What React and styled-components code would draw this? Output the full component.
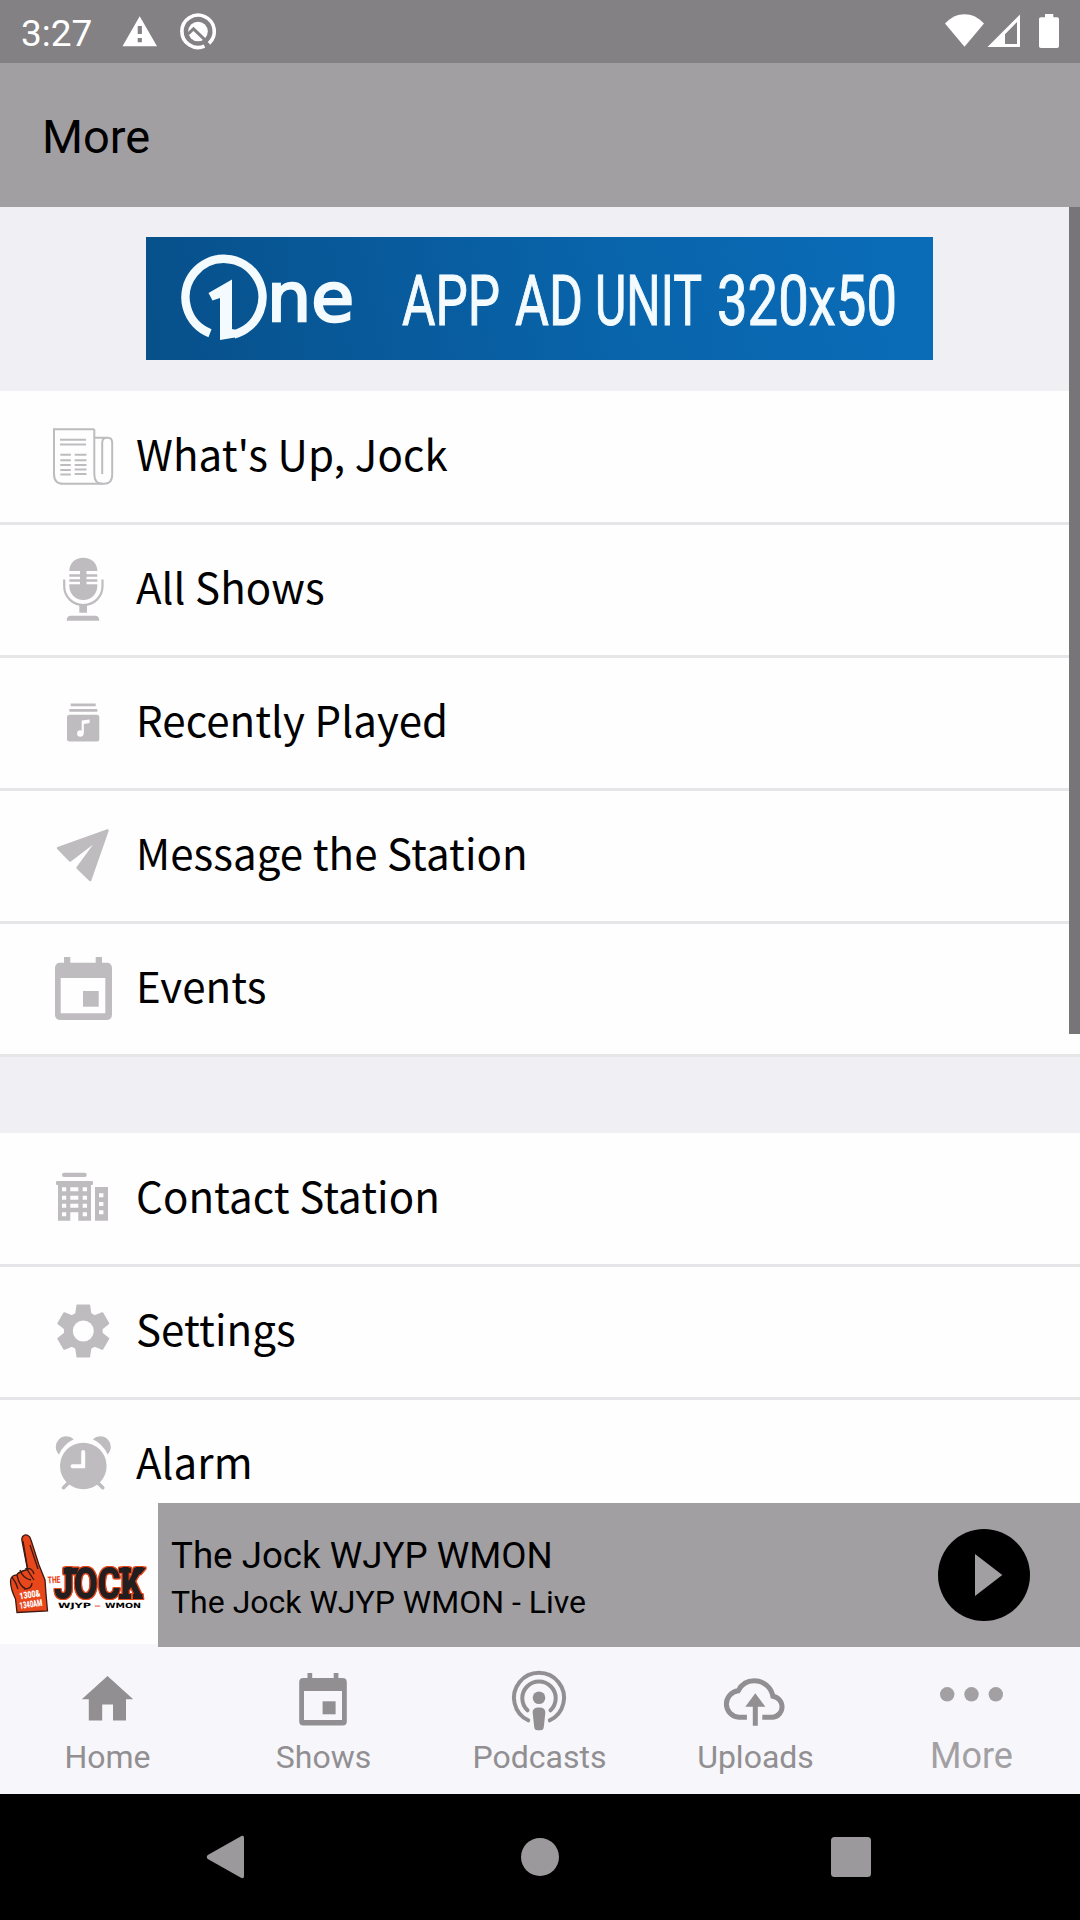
import React from 'react';
import styled, { createGlobalStyle } from 'styled-components';

const GlobalStyle = createGlobalStyle`
  * {
    box-sizing: border-box;
  }

  body {
    margin: 0;
    font-family: Roboto, 'Liberation Sans', sans-serif;
  }
`;

const Screen = styled.div`
  position: relative;
  display: flex;
  flex-direction: column;
  width: 1080px;
  height: 1920px;
  overflow: hidden;
  background-color: #f0eff3;
`;

const StatusBar = styled.div`
  display: flex;
  align-items: center;
  flex: 0 0 63px;
  padding: 0 20px 0 21px;
  background-color: #838184;
  color: #fff;

  svg {
    display: block;
    flex: none;
  }
`;

const Clock = styled.span`
  width: 99px;
  padding-top: 4px;
  font-size: 37px;
  line-height: 44px;
`;

const Spacer = styled.span`
  flex: 1;
`;

const Header = styled.header`
  flex: 0 0 144px;
  padding: 49px 42px 0;
  background-color: #a19fa2;
`;

const Title = styled.h1`
  margin: 0;
  color: #000;
  font-size: 47px;
  font-weight: 400;
  line-height: 50px;
`;

const Content = styled.main`
  flex: 0 0 1296px;
  overflow: hidden;
`;

const AdSlot = styled.div`
  height: 184px;
  padding: 30px 0 0 146px;
`;

const AdBanner = styled.svg`
  display: block;
  width: 787px;
  height: 123px;
  background: linear-gradient(80deg, #07508a 0%, #085a9b 30%, #0965ac 62%, #0a6cb8 100%);
`;

const Menu = styled.ul`
  margin: 0 0 76px;
  padding: 1px 0 0;
  background-color: #fefefe;
  list-style: none;
`;

const MenuItem = styled.li`
  display: flex;
  align-items: center;
  height: 133px;
  padding-left: 50px;
  border-bottom: 3px solid #e6e5e8;
`;

const MenuIcon = styled.svg`
  display: block;
  flex: none;
  width: 66px;
  height: 66px;
  margin-right: 20px;
  color: #bebcbf;
`;

const MenuLabel = styled.span`
  padding-bottom: 8px;
  color: #000;
  font-family: 'Noto Sans CJK SC', 'Noto Sans', sans-serif;
  font-size: 42px;
  letter-spacing: 0.08px;
  line-height: 60px;
  white-space: nowrap;
`;

// floats over the right edge of the list
const ScrollThumb = styled.div`
  position: absolute;
  top: 207px;
  right: 0;
  width: 11px;
  height: 827px;
  background-color: #777578;
`;

const Player = styled.section`
  display: flex;
  flex: 0 0 144px;
  background-color: #a19fa2;
`;

const Artwork = styled.svg`
  display: block;
  flex: none;
  width: 158px;
  height: 144px;
  background-color: #fefefe;
  border-bottom: 3px solid #f7f6fa;
`;

const Wordmark = styled.g`
  filter: drop-shadow(1px 0 #e8471c) drop-shadow(-1px 0 #e8471c) drop-shadow(0 1px #e8471c)
    drop-shadow(0 -1px #e8471c);
`;

const TrackInfo = styled.div`
  flex: 1;
  padding: 29px 0 0 13px;
  color: #000;
  white-space: nowrap;
`;

const TrackName = styled.div`
  font-size: 36.7px;
  line-height: 47px;
`;

const TrackStatus = styled.div`
  font-size: 32px;
  line-height: 46px;
`;

const PlayButton = styled.button`
  flex: none;
  align-self: center;
  width: 92px;
  height: 92px;
  margin-right: 50px;
  padding: 0;
  border: 0;
  border-radius: 50%;
  background-color: #000;

  svg {
    display: block;
  }
`;

const TabBar = styled.nav`
  display: grid;
  grid-template-columns: repeat(5, 1fr);
  flex: 0 0 147px;
  background-color: #f7f6fa;
`;

const Tab = styled.div`
  display: flex;
  flex-direction: column;
  align-items: center;
  padding-top: 18px;
  color: ${({ $active }) => ($active ? '#a2a0a3' : '#918f92')};

  svg {
    display: block;
  }
`;

const TabLabel = styled.span`
  margin-top: ${({ $active }) => ($active ? 5 : 6)}px;
  padding-right: 1px;
  font-size: ${({ $active }) => ($active ? 36 : 32)}px;
  line-height: 40px;
`;

const SystemNav = styled.div`
  display: grid;
  grid-template-columns: 315px 310px 40px;
  align-items: center;
  flex: 0 0 126px;
  padding-left: 206px;
  background-color: #000;
  color: #9b999c;

  svg {
    display: block;
  }
`;

const NewsIcon = () => (
  <MenuIcon viewBox="0 0 66 66" fill="none" stroke="currentColor" strokeWidth="2">
    <path d="M44.3 5.2H4V50c0 6.5 3 9.800 9 9.800h41c5.500 0 8.200-3.500 8.200-8.800V19c0-3.500-1.500-5.200-4.500-5.200H44.300" />
    <path d="M44.300 5.200V50c0 6 2.500 9.800 8 9.800M52.200 50V19c0-3.500 1.500-5.200 4.500-5.200" />
    <path d="M10 15.700h26M10 20.400h26" />
    <path d="M10.300 30.800h10.500M10.300 36.200h10.500M10.300 41h10.500M10.300 46h10.500M10.300 50.500h10.500" />
    <path d="M24.700 30.800H36.500M24.700 36.200H36.500M24.700 41H36.500M24.700 45.500H36.500M24.700 50H36.500" />
  </MenuIcon>
);

const MicIcon = () => (
  <MenuIcon viewBox="0 0 66 66" fill="currentColor">
    <path d="M19.300 14C19.300 6 25.500.8 33.300.8S47.300 6 47.300 14z" />
    <path d="M19.300 27.300h28V29c0 8-6.200 14-14 14s-14-6-14-14z" />
    <path d="M30 13h6.500v15H30zM19.300 17.200h28v2.500h-28zM19.300 22.200h28v2.600h-28z" />
    <path
      d="M14.200 22.500V29c0 11 8.500 19 19.100 19s19.200-8 19.200-19V22.500"
      fill="none"
      stroke="currentColor"
      strokeWidth="2.200"
    />
    <path d="M29.300 48H37v7.700h-7.700zM16.700 63.700c0-3.500 1.500-5 4-5h24.600c2.500 0 4 1.500 4 5z" />
  </MenuIcon>
);

const RecentIcon = () => (
  <MenuIcon viewBox="0 0 66 66" fill="currentColor">
    <path d="M20.700 13.600h25v2.600h-25zM19.300 19.100h28v2.700h-28z" />
    <rect x="17" y="24.700" width="32.300" height="26.700" rx="2.500" />
    <g fill="#fefefe">
      <circle cx="30.300" cy="43.500" r="3.200" />
      <path d="M31.700 30.500l7.900-1v3.400l-5.800 1V43.500h-2.100z" />
    </g>
  </MenuIcon>
);

const SendIcon = () => (
  <MenuIcon viewBox="0 0 66 66" fill="currentColor">
    <path
      d="M57.500 7.500L8 25.200l12.200 12.400L49 15.500 27.600 44.800l12.600 12.300z"
      stroke="currentColor"
      strokeWidth="2.400"
      strokeLinejoin="round"
    />
  </MenuIcon>
);

const EventIcon = () => (
  <MenuIcon viewBox="0 0 66 66" fill="currentColor">
    <path d="M14 1h6.300v7H14zM45.700 1H52v7h-6.300z" />
    <path
      fillRule="evenodd"
      d="M10.500 6.700h46c3.500 0 5.500 2 5.500 5.500v46.300c0 3.500-2 5.500-5.500 5.500h-46C7 64 5 62 5 58.500V12.200c0-3.500 2-5.500 5.500-5.500zM10.700 22v35.200h44.600V22z"
    />
    <path d="M33 35h15.700v15.700H33z" />
  </MenuIcon>
);

const BuildingIcon = () => (
  <MenuIcon viewBox="0 0 66 66" fill="currentColor">
    <rect x="12" y="6.700" width="24.700" height="4.300" rx="2.100" />
    <rect x="6" y="15" width="37" height="4" rx="1" />
    <path d="M8 18h33v36.700H8zM45 21h13v33.700H45z" />
    <g fill="#fefefe">
      {[21.3, 29.7, 37.8].map(y => (
        <path key={y} d={`M12 ${y}h4.200v4H12zM20.300 ${y}h8v4h-8zM32.700 ${y}h4.300v4h-4.300z`} />
      ))}
      <path d="M12 46.200h4.200v4H12zM32.700 46.200H37v4h-4.300zM20.300 46.200h8v9h-8z" />
      <path d="M49 27.300h4.400v4H49zM49 36h4.400v4H49zM49 44.200h4.400v4H49z" />
    </g>
  </MenuIcon>
);

const GearIcon = () => (
  <MenuIcon viewBox="0 0 66 66" fill="currentColor">
    {[0, 60, 120, 180, 240, 300].map(deg => (
      <path
        key={deg}
        transform={`rotate(${deg} 33.300 32)`}
        d="M27.500 5.600h11.600c.8 0 1 .3 1.100 1l1.300 9H25.100l1.300-9c.1-.7.300-1 1.100-1z"
      />
    ))}
    <circle cx="33.300" cy="32" r="19.400" />
    <circle cx="33.300" cy="32" r="10.500" fill="#fefefe" />
  </MenuIcon>
);

const AlarmIcon = () => (
  <MenuIcon viewBox="0 0 66 66" fill="currentColor">
    <circle cx="33.300" cy="34" r="23.300" />
    <path d="M9 22.500A10.600 10.600 0 0 1 23.800 7.300 30 30 0 0 0 9 22.500zM57.600 22.500A10.600 10.600 0 0 0 42.800 7.300 30 30 0 0 1 57.600 22.500z" />
    <path
      d="M13.500 55.700l7-7M52.800 55.700l-7-7"
      stroke="currentColor"
      strokeWidth="3.600"
      strokeLinecap="round"
    />
    <path
      d="M33.200 20v14.300H22.500"
      fill="none"
      stroke="#fefefe"
      strokeWidth="4"
      strokeLinecap="round"
    />
  </MenuIcon>
);

const TabIcon = ({ children }) => (
  <svg width="80" height="66" viewBox="0 0 80 66" fill="currentColor">
    {children}
  </svg>
);

const tabs = [
  {
    name: 'Home',
    icon: <path d="M39.500 11L65.200 34.300H58v21.200H45v-16H34.200v16H20.800V34.300H13.800z" />,
  },
  {
    name: 'Shows',
    icon: (
      <>
        <path d="M23.500 8h4.700v7h-4.700zM49.700 8h4.700v7h-4.700z" />
        <path
          fillRule="evenodd"
          d="M19.500 13h39c3 0 4.300 1.500 4.300 4.300v39c0 3-1.300 4.300-4.300 4.300h-39c-3 0-4.300-1.300-4.300-4.300v-39c0-2.800 1.300-4.300 4.300-4.300zM20 26v29h38V26z"
        />
        <path d="M38.600 36.300h13v13h-13z" />
      </>
    ),
  },
  {
    name: 'Podcasts',
    icon: (
      <>
        <g fill="none" stroke="currentColor" strokeWidth="4" strokeLinecap="round">
          <path d="M28.200 55.300a25 25 0 1 1 21.600 0" />
          <path d="M27.500 45.300a16.700 16.700 0 1 1 23 0" />
        </g>
        <circle cx="39" cy="32.700" r="6.300" />
        <path d="M39 42.500c4.300 0 6.600 1.800 6.300 5.500l-1.500 14c-.3 2.200-1.300 3.200-3.200 3.200h-3.200c-1.900 0-2.900-1-3.200-3.200l-1.500-14c-.3-3.700 2-5.500 6.300-5.500z" />
      </>
    ),
  },
  {
    name: 'Uploads',
    icon: (
      <>
        <path
          d="M30.900 52.300H23a13.300 13.300 0 0 1-.8-26.500c3-6 9-10 16-10 9.500 0 17 6.500 18.700 15.500a10.600 10.600 0 0 1 0 21H46.300"
          fill="none"
          stroke="currentColor"
          strokeWidth="5"
        />
        <path d="M39.300 28.300l10 13.500h-7.500v19h-5v-19h-7.500z" />
      </>
    ),
  },
  {
    name: 'More',
    active: true,
    icon: (
      <>
        <circle cx="15.200" cy="29.300" r="7.200" />
        <circle cx="39.500" cy="29.300" r="7.200" />
        <circle cx="63.800" cy="29.300" r="7.200" />
      </>
    ),
  },
];

const stationItems = [
  { label: "What's Up, Jock", Icon: NewsIcon },
  { label: 'All Shows', Icon: MicIcon },
  { label: 'Recently Played', Icon: RecentIcon },
  { label: 'Message the Station', Icon: SendIcon },
  { label: 'Events', Icon: EventIcon },
];

const appItems = [
  { label: 'Contact Station', Icon: BuildingIcon },
  { label: 'Settings', Icon: GearIcon },
  { label: 'Alarm', Icon: AlarmIcon },
];

const bannerWords = [
  { word: 'APP', x: 256, width: 98 },
  { word: 'AD', x: 369, width: 68 },
  { word: 'UNIT', x: 449, width: 107 },
  { word: '320x50', x: 571, width: 180 },
];

const MenuList = ({ items }) => (
  <Menu>
    {items.map(({ label, Icon }) => (
      <MenuItem key={label}>
        <Icon />
        <MenuLabel>{label}</MenuLabel>
      </MenuItem>
    ))}
  </Menu>
);

const Banner = () => (
  <AdBanner viewBox="0 0 787 123" fill="#f4fbff">
    <path
      d="M64 96.200A38.500 38.500 0 1 1 88 97.500"
      fill="none"
      stroke="#f4fbff"
      strokeWidth="8.500"
    />
    <path d="M62.500 56L86 42.500V92l8.500 2-5.500 6.500-15 2.500V61l-7.500 2.500z" />
    <text
      x="121"
      y="83.500"
      stroke="#f4fbff"
      strokeWidth="2.500"
      fontFamily="'DejaVu Sans', sans-serif"
      fontSize="68"
      textLength="87"
      lengthAdjust="spacingAndGlyphs"
    >
      ne
    </text>
    {bannerWords.map(({ word, x, width }) => (
      <text
        key={word}
        x={x}
        y="87.500"
        fontFamily="Roboto, sans-serif"
        fontSize="70"
        fontWeight="400"
        stroke="#f4fbff"
        strokeWidth="1"
        textLength={width}
        lengthAdjust="spacingAndGlyphs"
      >
        {word}
      </text>
    ))}
  </AdBanner>
);

const StationLogo = () => (
  <Artwork viewBox="0 0 158 141">
    <path
      d="M22 38c-1-5 3-7 6-5.500 2 1 2.500 2.500 3 4.500l8 25 6 15 1 14 1.500 17L17 109.500 15.500 96c-3-6-5-12-5-18 0-4 3-6 6-6 2-3 5-4 11-5.500z"
      fill="#e8471c"
      stroke="#3a1a12"
      strokeWidth="1.300"
    />
    <path
      d="M23 38l5 30 6 9M30 42l8 24M12 74c3 4 5 8 6 12M17 72c1 5 4 12 9 14M20 67c2 6 6 9 11 10M25 66c5-2 8 1 9 5M24 86c5 0 8-2 8-6"
      fill="none"
      stroke="#3a1a12"
      strokeWidth="1.300"
    />
    <g fill="#fff" fontFamily="Roboto, sans-serif" fontWeight="900">
      <text x="20" y="96.500" fontSize="9.500" textLength="21" lengthAdjust="spacingAndGlyphs" transform="rotate(-9 20 96.500)">
        1300&amp;
      </text>
      <text x="20" y="106" fontSize="9.500" textLength="23" lengthAdjust="spacingAndGlyphs" transform="rotate(-8 20 106)">
        1340AM
      </text>
    </g>
    <text
      x="48"
      y="80.500"
      fill="#e8471c"
      fontFamily="Roboto, sans-serif"
      fontSize="9.500"
      fontWeight="900"
      textLength="12.500"
      lengthAdjust="spacingAndGlyphs"
      transform="rotate(-4 48 80)"
    >
      THE
    </text>
    <Wordmark fill="#231f20">
      <path d="M63.500 64.800H79l-2.500 6.500h-13zM119 64.800h12v5h-12zM119 91h12v5h-12zM134 64.800h12l-5.500 6.500H132zM133 91h9.500v5H133z" />
      <text
        x="54"
        y="96"
        fontFamily="Roboto, sans-serif"
        fontSize="44"
        fontWeight="900"
        textLength="89"
        lengthAdjust="spacingAndGlyphs"
      >
        JOCK
      </text>
    </Wordmark>
    <g fontFamily="'DejaVu Sans', sans-serif" fontSize="7.200" fontWeight="700">
      <text x="58" y="105.300" textLength="33" lengthAdjust="spacingAndGlyphs">WJYP</text>
      <text x="94" y="105.300" fill="#e8471c" textLength="7" lengthAdjust="spacingAndGlyphs">–</text>
      <text x="105" y="105.300" textLength="36" lengthAdjust="spacingAndGlyphs">WMON</text>
    </g>
  </Artwork>
);

const App = () => (
  <>
    <GlobalStyle />
    <Screen>
      <StatusBar>
        <Clock>3:27</Clock>
        <svg width="100" height="63" viewBox="120 0 100 63" fill="#fff">
          <path
            fillRule="evenodd"
            d="M139.700 16.300L157 46.200h-34.500zM137.700 26v8h4.200v-8zM137.700 38v4.300h4.200V38z"
          />
          <path
            d="M204.500 46.200A16.200 16.200 0 1 1 209 43.300"
            fill="none"
            stroke="#fff"
            strokeWidth="3.600"
          />
          <circle cx="198" cy="31.500" r="9.800" />
          <path d="M188 34l5.500-5.200 12.500 12" fill="none" stroke="#838184" strokeWidth="3" />
        </svg>
        <Spacer />
        <svg width="120" height="63" viewBox="940 0 120 63" fill="#fff">
          <path d="M945 23.500c11-12.500 28-12.500 39 0L964.500 46.700z" />
          <path fillRule="evenodd" d="M1020 14.500V47h-32.500zM1017 22l-12 12.300V44h12z" />
          <path d="M1045 14h8.300v3.300h3.700c1.300 0 2 .7 2 2V46c0 1.300-.7 2-2 2h-16c-1.300 0-2-.7-2-2V19.300c0-1.300.7-2 2-2h4z" />
        </svg>
      </StatusBar>
      <Header>
        <Title>More</Title>
      </Header>
      <Content>
        <AdSlot>
          <Banner />
        </AdSlot>
        <MenuList items={stationItems} />
        <MenuList items={appItems} />
      </Content>
      <Player>
        <StationLogo />
        <TrackInfo>
          <TrackName>The Jock WJYP WMON</TrackName>
          <TrackStatus>The Jock WJYP WMON - Live</TrackStatus>
        </TrackInfo>
        <PlayButton aria-label="Play">
          <svg width="92" height="92" viewBox="0 0 92 92" fill="#a19fa2">
            <path d="M37 25l27.300 21L37 67z" />
          </svg>
        </PlayButton>
      </Player>
      <TabBar>
        {tabs.map(({ name, icon, active }) => (
          <Tab key={name} $active={active}>
            <TabIcon>{icon}</TabIcon>
            <TabLabel $active={active}>{name}</TabLabel>
          </Tab>
        ))}
      </TabBar>
      <SystemNav>
        <svg width="40" height="44" viewBox="0 0 40 44" fill="currentColor">
          <path d="M35 1.300c1.800-1 3-.3 3 1.500v38.400c0 1.800-1.200 2.500-3 1.500L1.800 24c-1.400-1.200-1.400-2.800 0-4z" />
        </svg>
        <svg width="38" height="38" viewBox="0 0 38 38" fill="currentColor">
          <circle cx="19" cy="19" r="19" />
        </svg>
        <svg width="40" height="40" viewBox="0 0 40 40" fill="currentColor">
          <rect width="40" height="40" rx="3.500" />
        </svg>
      </SystemNav>
      <ScrollThumb />
    </Screen>
  </>
);

export default App;
